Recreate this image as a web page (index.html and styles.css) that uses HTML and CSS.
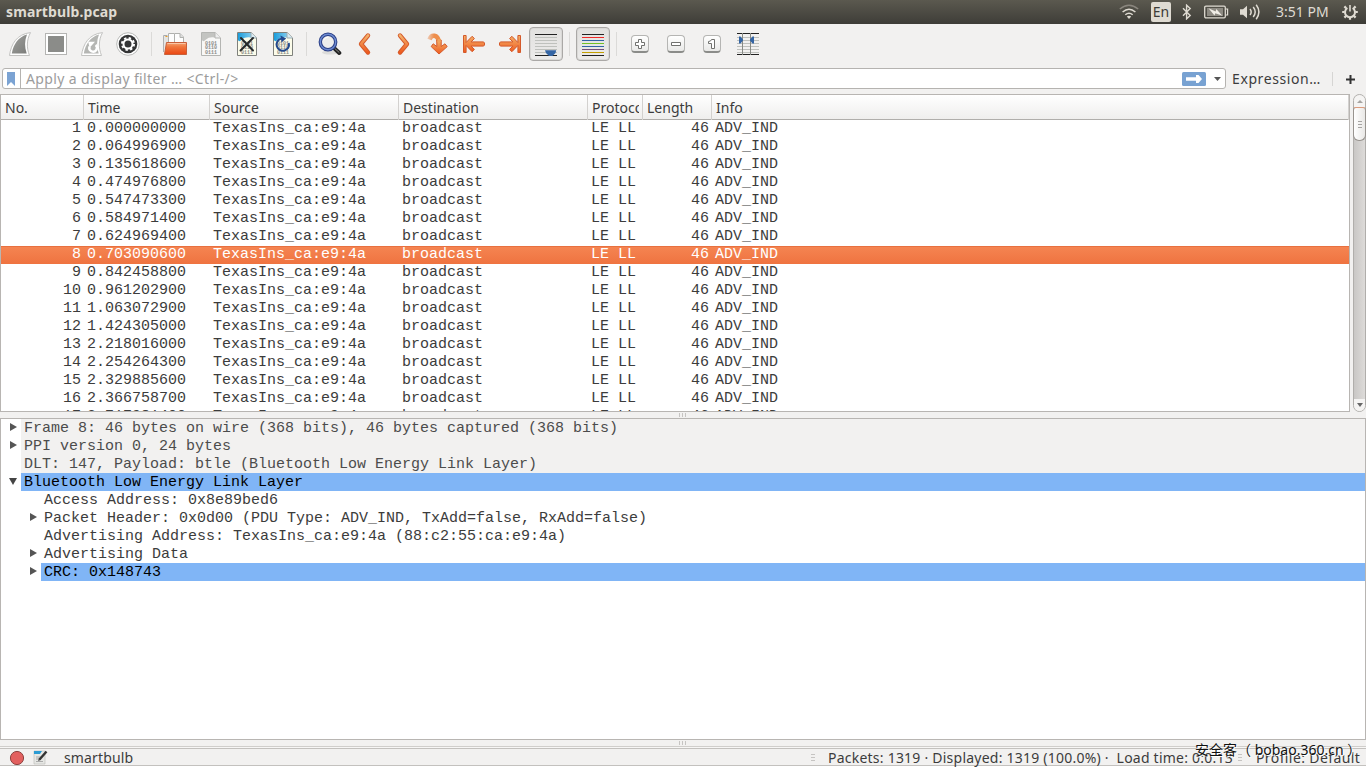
FILE: index.html
```
<!DOCTYPE html>
<html lang="en">
<head>
  <meta charset="UTF-8">
  <title>smartbulb.pcap</title>
  <link rel="stylesheet" href="styles.css">
</head>
<body>

<svg class="defs" width="0" height="0">
  <defs>
    <linearGradient id="orange" x1="0" y1="0" x2="0" y2="1">
      <stop offset="0" stop-color="#f4b26b"/>
      <stop offset="1" stop-color="#ee5a1e"/>
    </linearGradient>
    <linearGradient id="hook" gradientUnits="userSpaceOnUse" x1="1" y1="0" x2="8" y2="0">
      <stop offset="0" stop-color="#e98b52" stop-opacity=".3"/>
      <stop offset="1" stop-color="#ee8e4b"/>
    </linearGradient>
    <linearGradient id="folder" x1="0" y1="0" x2="0" y2="1">
      <stop offset="0" stop-color="#f6a878"/>
      <stop offset=".35" stop-color="#f0783f"/>
      <stop offset="1" stop-color="#ea4612"/>
    </linearGradient>
    <linearGradient id="grey" x1="0" y1="0" x2="1" y2="1">
      <stop offset="0" stop-color="#a0a19e"/>
      <stop offset="1" stop-color="#7c7d7a"/>
    </linearGradient>
    <linearGradient id="sky" x1="0" y1="0" x2="1" y2="0">
      <stop offset="0" stop-color="#1b9ddb"/>
      <stop offset="1" stop-color="#7cc9ee"/>
    </linearGradient>
  </defs>
</svg>

<header class="titlebar">
  <span class="title">smartbulb.pcap</span>
  <div class="tray">
    <svg class="wifi" width="20" height="16" viewBox="0 0 20 16" fill="none" stroke="#dfdbd2" stroke-width="1.5">
      <path d="M.8 5Q10-2.6 19.2 5" stroke="#8a867e"/>
      <path d="M3.6 8Q10 2.4 16.4 8"/>
      <path d="M6.3 10.8Q10 7.6 13.7 10.8"/>
      <path d="M7.8 12.6Q10 11 12.2 12.6L10 15z" fill="#dfdbd2" stroke="none"/>
    </svg>
    <span class="lang">En</span>
    <svg class="bt" width="10" height="16" viewBox="0 0 10 16" fill="none" stroke="#dfdbd2" stroke-width="1.4">
      <path d="M1 4.2l7.2 7.2-3.6 3.4V1.2l3.6 3.4L1 11.8"/>
    </svg>
    <svg class="battery" width="25" height="14" viewBox="0 0 25 14">
      <rect x=".7" y="1.2" width="20.6" height="11.6" rx="1.2" fill="none" stroke="#dfdbd2" stroke-width="1.3"/>
      <path d="M22 4h1.6v6H22" fill="none" stroke="#dfdbd2" stroke-width="1.2"/>
      <path d="M3 3h16v8H3z" fill="#8d8a82"/>
      <path d="M4.5 3.2l7.2 3.2.6-2.4 6 6.8-7-2.6-.8 2.4z" fill="#f0ede6"/>
    </svg>
    <svg class="sound" width="21" height="16" viewBox="0 0 21 16">
      <path d="M0 5.2h3L7 1.8v12.4L3 10.8H0z" fill="#dfdbd2"/>
      <g fill="none" stroke="#dfdbd2" stroke-width="1.5">
        <path d="M10 5q2.4 3 0 6"/>
        <path d="M13.2 3q4 5 0 10"/>
        <path d="M16.2.8q5.4 7.2 0 14.4"/>
      </g>
    </svg>
    <span class="clock">3:51 PM</span>
    <svg class="power" width="16" height="16" viewBox="0 0 16 16" fill="none" stroke="#dfdbd2">
      <path d="M5.4 4A5 5 0 1 0 10.6 4" stroke-width="2"/>
      <path d="M8 1v6.5" stroke-width="1.6"/>
      <path d="M.2 8h2.4M13.4 8h2.4M8 13.2v2.6M2.4 2.4l1.8 1.8M13.6 2.4l-1.8 1.8M2.4 13.6l1.8-1.8M13.6 13.6l-1.8-1.8" stroke-width="2.2"/>
    </svg>
  </div>
</header>

<nav class="toolbar">
  <button><svg width="24" height="24" viewBox="0 0 24 24">
    <path d="M1.5 23.5C3 12 9 2 22.5.6 18.5 8 18.5 16 21.5 23.5z" fill="#fff" stroke="#c2c2c0"/>
    <path d="M3.8 21.5C5.5 12 10.5 5 19 2.6 16.5 9 16.5 15 18.7 21.5z" fill="url(#grey)"/>
  </svg></button>
  <button><svg width="24" height="24" viewBox="0 0 24 24">
    <rect x="1.5" y="1.5" width="21" height="21" fill="#fff" stroke="#b4b4b2"/>
    <rect x="4" y="4" width="16" height="16" fill="#8b8c89"/>
  </svg></button>
  <button><svg width="24" height="24" viewBox="0 0 24 24">
    <path d="M1.5 23.5C3 12 9 2 22.5.6 18.5 8 18.5 16 21.5 23.5z" fill="#fff" stroke="#c2c2c0"/>
    <path d="M3.8 21.5C5.5 12 10.5 5 19 2.6 16.5 9 16.5 15 18.7 21.5z" fill="#b5b6b3"/>
    <path d="M9.600 14.500a3.800 3.800 0 1 0 6-1.500" fill="none" stroke="#fff" stroke-width="2.4"/>
    <path d="M8.200 9.700h6.800l-5.400 6z" fill="#fff"/>
  </svg></button>
  <button><svg width="24" height="24" viewBox="0 0 24 24">
    <circle cx="12" cy="12" r="11.3" fill="#fff" stroke="#b9bab8"/>
    <circle cx="12" cy="12" r="9.3" fill="#343536"/>
    <circle cx="12" cy="12" r="4.5" fill="none" stroke="#fff" stroke-width="2"/>
    <circle cx="12" cy="12" r="6" fill="none" stroke="#fff" stroke-width="2" stroke-dasharray="2.36 2.35"/>
  </svg></button>
  <i class="sep"></i>
  <button><svg width="24" height="24" viewBox="0 0 24 24">
    <path d="M.6 20V3.5h3.8" fill="#eee" stroke="#aaa"/>
    <path d="M1.5 4h4v16h-4z" fill="#e4e4e2"/>
    <path d="M2.5 4.5h2" stroke="#f0a020"/>
    <path d="M5.5 12V1.5H11l3 3V12z" fill="#fdfdfd" stroke="#b0b1ae"/>
    <path d="M11.5 12V1.5H17L20.5 5V12z" fill="#fdfdfd" stroke="#b0b1ae"/>
    <path d="M17 1.5v4h3.5" fill="#ddd" stroke="#b0b1ae"/>
    <path d="M3.5 10.5h20v12h-22z" fill="url(#folder)" stroke="#c9603a"/>
    <path d="M4.5 11.5h18" stroke="#f8c6a6"/>
  </svg></button>
  <button><svg width="24" height="24" viewBox="0 0 24 24">
    <path d="M2.5.5h13.6l5.4 5.4v17.6h-19z" fill="#f8f8f7" stroke="#b4b5b2"/>
    <path d="M3 1h13v4.5q-6-1-9 2T3 8z" fill="#c3c4c1"/>
    <path d="M16 .5V6h5.5" fill="#eee" stroke="#b4b5b2"/>
    <g class="bits"><text x="6" y="12.5">0101</text><text x="6" y="17">0110</text><text x="6" y="21.5">0111</text></g>
  </svg></button>
  <button><svg width="24" height="24" viewBox="0 0 24 24">
    <path d="M2.5.5h13.6l5.4 5.4v17.6h-19z" fill="#fcfcea" stroke="#7f817c"/>
    <path d="M3 1h13v4.5q-6-1-9 2T3 8z" fill="url(#sky)"/>
    <path d="M16 .5V6h5.5" fill="#d6ebf5" stroke="#9dabb0"/>
    <g class="bits"><text x="6" y="12.5">0101</text><text x="6" y="17">0110</text><text x="6" y="21.5">0111</text></g>
    <path d="M6 6L18 18.5M18 6L5.500 18.500" stroke="#25292b" stroke-width="2" stroke-linecap="round"/>
  </svg></button>
  <button><svg width="24" height="24" viewBox="0 0 24 24">
    <path d="M2.5.5h13.6l5.4 5.4v17.6h-19z" fill="#fcfcea" stroke="#7f817c"/>
    <path d="M3 1h13v4.5q-6-1-9 2T3 8z" fill="url(#sky)"/>
    <path d="M16 .5V6h5.5" fill="#d6ebf5" stroke="#9dabb0"/>
    <g class="bits"><text x="6" y="12.5">0101</text><text x="6" y="17">0110</text><text x="6" y="21.5">0111</text></g>
    <path d="M10 6.6a6.200 6.200 0 1 0 7.800 4.400" fill="none" stroke="#23498d" stroke-width="2"/>
    <path d="M9.5 3.500l5.700 3-4.700 4z" fill="#23498d"/>
  </svg></button>
  <i class="sep"></i>
  <button><svg width="24" height="24" viewBox="0 0 24 24">
    <ellipse cx="12" cy="20.5" rx="8" ry="2" fill="#dcdcda"/>
    <path d="M16.5 16.5l4.800 4.500" stroke="#222" stroke-width="4" stroke-linecap="round"/>
    <path d="M17 16.700l4 3.600" stroke="#8b8c89" stroke-width="1" stroke-linecap="round"/>
    <circle cx="10" cy="10" r="7.7" fill="#eeeeec" stroke="#2b3f86" stroke-width="3.4"/>
    <circle cx="10" cy="10" r="7.7" fill="none" stroke="#6c8ad0" stroke-width="1.4"/>
    <path d="M5 9a5 5 0 0 1 6-4Q7 6 5 9" fill="#fff"/>
  </svg></button>
  <button><svg width="24" height="24" viewBox="0 0 24 24">
    <path d="M14 3.5L7 12l7 8.500" class="line-out"/><path d="M14 3.5L7 12l7 8.500" class="line-in"/>
  </svg></button>
  <button><svg width="24" height="24" viewBox="0 0 24 24">
    <path d="M10 3.5l7 8.500-7 8.500" class="line-out"/><path d="M10 3.5l7 8.500-7 8.500" class="line-in"/>
  </svg></button>
  <button><svg width="24" height="24" viewBox="0 0 24 24">
    <path d="M3.500 7.500Q5 3.200 8.500 3.800T13 10" fill="none" stroke="url(#hook)" stroke-width="4.6"/>
    <path d="M10.800 8h4.400v6.500l3.800-2.700 2.200 2.800L13 22 5.200 14.600l2-2.800 3.600 2.700z" fill="url(#orange)" stroke="#d4592a" stroke-linejoin="round"/>
    <path d="M11.400 7h3.300v3h-3.300z" fill="#f0a25c"/>
  </svg></button>
  <button><svg width="24" height="24" viewBox="0 0 24 24">
    <path d="M1.500 3.500h2.600v7l6-6.200 2.300 2.200-3.300 3.400h12q1.500 0 1.500 2.100t-1.500 2.100h-12l3.300 3.400-2.300 2.200-6-6.200v7H1.500z" fill="url(#orange)" stroke="#d4592a" stroke-linejoin="round"/>
  </svg></button>
  <button><svg width="24" height="24" viewBox="0 0 24 24">
    <path d="M22.500 3.500h-2.600v7l-6-6.200-2.300 2.200 3.300 3.400h-12Q1.400 9.900 1.400 12t1.500 2.100h12l-3.300 3.400 2.300 2.200 6-6.200v7h2.600z" fill="url(#orange)" stroke="#d4592a" stroke-linejoin="round"/>
  </svg></button>
  <button class="pressed"><svg width="24" height="24" viewBox="0 0 24 24">
    <path d="M1 2.5h22M1 23.5h22" stroke="#222"/>
    <path d="M1 5.5h22M1 8.5h22M1 11.5h22M1 14.5h22M1 17.5h22M1 20.5h22" stroke="#bfc1bd"/>
    <path d="M11 18.200h11.200L21.500 21l-3 3h-3.500l-3-3z" fill="#3465a4"/>
  </svg></button>
  <i class="sep"></i>
  <button class="pressed"><svg width="24" height="24" viewBox="0 0 24 24">
    <path d="M1 2.5h22M1 23.5h22" stroke="#222"/>
    <path d="M1 5.5h22" stroke="#ef2929"/>
    <path d="M1 8.5h22M1 14.5h22" stroke="#3465a4"/>
    <path d="M1 11.5h22" stroke="#73c226"/>
    <path d="M1 17.5h22" stroke="#75507b"/>
    <path d="M1 20.5h22" stroke="#c4a000"/>
  </svg></button>
  <i class="sep"></i>
  <button><span class="key"><svg width="12" height="12" viewBox="0 0 12 12"><path d="M4.5 1.5h3v3h3v3h-3v3h-3v-3h-3v-3h3z"/></svg></span></button>
  <button><span class="key"><svg width="12" height="12" viewBox="0 0 12 12"><path d="M1.5 4.5h9v3h-9z"/></svg></span></button>
  <button><span class="key"><svg width="12" height="12" viewBox="0 0 12 12"><path d="M5.5 1.5h3v9h-3v-5h-3v-2q2.500 0 3-2z"/></svg></span></button>
  <button><svg width="24" height="24" viewBox="0 0 24 24">
    <path d="M1 5.5h22M1 8.5h22M1 11.5h22M1 14.5h22M1 17.5h22M1 20.5h22" stroke="#bfc1bd"/>
    <path d="M1 1.5h22M1 22.5h22" stroke="#222"/>
    <path d="M6.5 1v22M14.5 1v22" stroke="#888a85"/>
    <path d="M3 4.500h1.500l2.500 3v1l-2.500 3H3zM18 4.500h-1.500l-2.500 3v1l2.500 3H18z" fill="#3465a4"/>
  </svg></button>
</nav>

<section class="filterbar">
  <div class="filter">
    <span class="bookmark"><svg width="8" height="14" viewBox="0 0 8 14"><path d="M0 0h8v14l-4-4-4 4z" fill="#7ba3d3"/></svg></span>
    <span class="placeholder">Apply a display filter … &lt;Ctrl-/&gt;</span>
    <svg class="apply" width="24" height="14" viewBox="0 0 24 14">
      <rect width="24" height="14" rx="1.5" fill="#78a2d2"/>
      <path d="M4 5.200h10V3h2.500L20 7l-3.500 4H14V8.800H4z" fill="#fff"/>
    </svg>
    <svg class="drop" width="7" height="4" viewBox="0 0 7 4"><path d="M0 0h7L3.500 4z" fill="#555"/></svg>
  </div>
  <span class="expression">Expression…</span>
  <i class="vline"></i>
  <svg class="add" width="9" height="9" viewBox="0 0 9 9"><path d="M4.500 0v9M0 4.500h9" stroke="#333" stroke-width="2"/></svg>
</section>

<main>
  <section class="packets">
    <div class="list">
      <div class="cols head">
        <span>No.</span><span>Time</span><span>Source</span><span>Destination</span><span><b class="clip">Protocol</b></span><span>Length</span><span>Info</span>
      </div>
      <div class="rows" id="rows"></div>
    </div>
    <div class="scrollbar">
      <i class="up"></i>
      <i class="thumb"><b></b></i>
      <i class="down"></i>
    </div>
  </section>

  <div class="splitter"><i></i></div>

  <section class="details">
    <div class="node shut"><span class="shade">Frame 8: 46 bytes on wire (368 bits), 46 bytes captured (368 bits)</span></div>
    <div class="node shut"><span class="shade">PPI version 0, 24 bytes</span></div>
    <div class="node"><span class="shade">DLT: 147, Payload: btle (Bluetooth Low Energy Link Layer)</span></div>
    <div class="node open"><span class="blue">Bluetooth Low Energy Link Layer</span></div>
    <div class="node child"><span>Access Address: 0x8e89bed6</span></div>
    <div class="node child shut"><span>Packet Header: 0x0d00 (PDU Type: ADV_IND, TxAdd=false, RxAdd=false)</span></div>
    <div class="node child"><span>Advertising Address: TexasIns_ca:e9:4a (88:c2:55:ca:e9:4a)</span></div>
    <div class="node child shut"><span>Advertising Data</span></div>
    <div class="node child shut"><span class="blue">CRC: 0x148743</span></div>
  </section>

  <div class="splitter"><i></i></div>
</main>

<footer class="status">
  <svg class="expert" width="16" height="16" viewBox="0 0 16 16"><circle cx="8" cy="8" r="6.6" fill="#e2605f" stroke="#8e4340"/></svg>
  <svg class="note" width="15" height="15" viewBox="0 0 15 15">
    <path d="M1 1h11v13H1z" fill="#e6e7e4" stroke="#b9bbb7" stroke-width=".6"/>
    <path d="M1 1h8l-2 3H1z" fill="#2a9bd3"/>
    <path d="M3 7h5M3 9h4M3 11.500h7" stroke="#aaa"/>
    <path d="M13.500 1.500L6.500 9.500" stroke="#333" stroke-width="2.4"/>
    <path d="M5.200 11l.6-2.400 1.700 1.400z" fill="#333"/>
  </svg>
  <span class="file">smartbulb</span>
  <i class="grip"></i>
  <span class="counts">Packets: 1319 · Displayed: 1319 (100.0%) ·&nbsp; Load time: 0:0.13</span>
  <i class="grip second"></i>
  <span class="profile">Profile: Default</span>
  <span class="watermark">安全客（ bobao.360.cn ）</span>
</footer>

<script>
const times = [
  '0.000000000', '0.064996900', '0.135618600', '0.474976800', '0.547473300', '0.584971400',
  '0.624969400', '0.703090600', '0.842458800', '0.961202900', '1.063072900', '1.424305000',
  '2.218016000', '2.254264300', '2.329885600', '2.366758700', '2.717981400'
];
const selected = 8;

document.getElementById('rows').innerHTML = times.map((time, i) => `
  <div class="cols row${i + 1 === selected ? ' selected' : ''}">
    <span class="num">${i + 1}</span><span>${time}</span><span>TexasIns_ca:e9:4a</span><span>broadcast</span>
    <span>LE LL</span><span class="num">46</span><span>ADV_IND</span>
  </div>`).join('');
</script>

</body>
</html>
```
FILE: styles.css
```
* {
  box-sizing: border-box;
}
body {
  margin: 0;
  width: 1366px;
  height: 768px;
  overflow: hidden;
  display: flex;
  flex-direction: column;
  background: #f2f1f0;
  color: #3c3c3c;
  font-family: 'Noto Sans', 'Open Sans', sans-serif;
  font-size: 14px;
}
svg {
  display: block;
  flex: none;
}
.defs {
  position: absolute;
}

/* top panel */
.titlebar {
  height: 24px;
  flex: none;
  display: flex;
  align-items: center;
  justify-content: space-between;
  padding: 0 8px 0 6px;
  background: linear-gradient(#5b594f, #3e3d38);
  color: #dfdbd2;
}
.title {
  padding-bottom: 2px;
  font-weight: bold;
  letter-spacing: 0.12px;
}
.tray {
  display: flex;
  align-items: center;
}
.lang {
  width: 20px;
  height: 20px;
  margin: 0 11px 0 12px;
  border-radius: 2px;
  background: #dfdbd2;
  color: #3c3b37;
  line-height: 20px;
  text-align: center;
}
.battery {
  margin: 0 11px 0 12px;
}
.clock {
  width: 54px;
  margin: 0 12px 0 15px;
  padding-bottom: 2px;
  white-space: nowrap;
}

/* toolbar */
.toolbar {
  height: 44px;
  flex: none;
  display: flex;
  padding: 3px 0 0 2px;
}
.toolbar button {
  width: 34px;
  height: 34px;
  margin: 0 1px;
  padding: 0;
  border: 1px solid transparent;
  border-radius: 4px;
  background: none;
  display: flex;
  align-items: center;
  justify-content: center;
}
.toolbar .pressed {
  border: 1px solid #aaa8a6;
  background: linear-gradient(#e2e1df, #ecebea);
  box-shadow: inset 0 0 0 1px #dad9d7;
}
.sep {
  width: 1px;
  height: 24px;
  margin: 5px 5px 0;
  background: #dbdad8;
}
.bits {
  font: bold 5px 'Liberation Mono', monospace;
  fill: #8b8c89;
}
.line-out, .line-in {
  fill: none;
  stroke-linecap: round;
  stroke-linejoin: round;
}
.line-out {
  stroke: #d4592a;
  stroke-width: 4.4;
}
.line-in {
  stroke: url(#orange);
  stroke-width: 2.6;
}
.key {
  width: 18px;
  height: 18px;
  display: grid;
  place-items: center;
  border: 1px solid #b5b5b3;
  border-bottom: 2px solid #8b8c89;
  border-radius: 4px;
  background: linear-gradient(#fff, #e9e9e7);
}
.key path {
  fill: #fff;
  stroke: #70716e;
}

/* display filter */
.filterbar {
  height: 26px;
  flex: none;
  display: flex;
  align-items: flex-start;
  padding-left: 2px;
}
.filter {
  width: 1224px;
  height: 21px;
  display: flex;
  align-items: center;
  padding-right: 4px;
  border: 1px solid #b5b3b0;
  border-radius: 3px;
  background: #fff;
}
.bookmark {
  width: 18px;
  height: 19px;
  padding-right: 2px;
  display: grid;
  place-items: center;
  border-right: 1px solid #b5b3b0;
}
.placeholder {
  margin-left: 5px;
  color: #9c9c9c;
  letter-spacing: 0.38px;
}
.apply {
  margin: 0 8px 0 auto;
}
.expression {
  width: 93px;
  margin-left: 6px;
  line-height: 21px;
  letter-spacing: 0.6px;
}
.vline {
  width: 1px;
  height: 14px;
  margin: 4px 13px 0 7px;
  background: #d6d5d3;
}
.add {
  margin-top: 7px;
}

/* packet list */
main {
  flex: 1;
  min-height: 0;
}
.packets {
  height: 318px;
  display: flex;
  justify-content: space-between;
}
.list {
  width: 1350px;
  overflow: hidden;
  border: 1px solid #b8b5b2;
  background: #fff;
}
.cols {
  display: grid;
  grid-template-columns: 83px 126px 189px 189px 55px 69px 637px;
}
.head {
  height: 25px;
  border-bottom: 1px solid #b0aeab;
  background: linear-gradient(#fff, #efeeed);
  line-height: 25px;
}
.head span {
  padding-left: 4px;
  white-space: nowrap;
  border-right: 1px solid #d3d1cf;
}
.clip {
  display: block;
  width: 47px;
  overflow: hidden;
  font-weight: normal;
}
.row, .details {
  font-family: 'Liberation Mono', monospace;
  font-size: 15px;
  white-space: nowrap;
}
.row {
  height: 18px;
  line-height: 18px;
}
.row span {
  padding: 0 3px;
}
.row .num {
  text-align: right;
}
.selected {
  background: linear-gradient(#f58552, #ef7340);
  box-shadow: inset 0 1px #e8703f;
  color: #fff;
}
.scrollbar {
  width: 13px;
  display: flex;
  flex-direction: column;
  border: 1px solid #b0aeab;
  border-radius: 7px;
  background: linear-gradient(90deg, #c9c7c5, #dddbd9);
}
.up, .down {
  height: 12px;
  display: grid;
  place-items: center;
  border-radius: 6px 6px 0 0;
  background: #f5f4f3;
}
.up::after, .down::after {
  content: '';
  border: 3px solid transparent;
}
.up::after {
  border-top-width: 0;
  border-bottom-color: #a6a4a2;
}
.down {
  margin-top: auto;
  border-radius: 0 0 6px 6px;
}
.down::after {
  border-top: 4px solid #666;
  border-bottom-width: 0;
}
.thumb {
  height: 34px;
  margin: 0 -1px;
  display: grid;
  place-items: center;
  border: 1px solid #98948f;
  border-top-color: #dc9b7d;
  border-radius: 3px 3px 6px 6px;
  background: linear-gradient(90deg, #fff, #e9e8e6);
}
.thumb b {
  width: 4px;
  height: 7px;
  background: repeating-linear-gradient(#a6a4a2 0 1px, transparent 1px 3px);
}
.splitter {
  height: 6px;
  display: grid;
  place-items: center;
}
.splitter i {
  width: 8px;
  height: 4px;
  background: repeating-linear-gradient(90deg, #c6c4c2 0 1px, transparent 1px 3px);
}

/* packet details */
.details {
  height: 322px;
  border: 1px solid #b8b5b2;
  background: #fff;
}
.node {
  height: 18px;
  padding-left: 20px;
  position: relative;
  line-height: 19px;
}
.node span {
  display: block;
  height: 18px;
  padding-left: 3px;
}
.child {
  padding-left: 40px;
}
.shut::before, .open::before {
  content: '';
  position: absolute;
  left: 9px;
  top: 4px;
  border: 4px solid transparent;
  border-left: 7px solid #555;
  border-right: 0;
}
.child::before {
  left: 29px;
}
.open::before {
  left: 8px;
  top: 5px;
  border: 4px solid transparent;
  border-top: 7px solid #444;
  border-bottom: 0;
}
.shade {
  background: #f2f1f0;
  color: #4c4c4c;
}
.blue {
  background: #80b5f6;
  color: #000;
}

/* status bar */
.status {
  height: 22px;
  flex: none;
  display: flex;
  align-items: center;
  position: relative;
  padding-left: 9px;
  border-top: 1px solid #d0cecb;
  box-shadow: inset 0 1px #f7f6f5, inset 0 2px #c3c1be, inset 0 -2px #fff, inset 0 -3px #c3c1be;
  white-space: nowrap;
}
.note {
  margin: 0 16px 0 8px;
}
.file {
  width: 747px;
  letter-spacing: 0.15px;
}
.grip {
  width: 4px;
  height: 8px;
  background: repeating-linear-gradient(#c6c4c2 0 1px, transparent 1px 3px);
}
.counts {
  width: 405px;
  margin-left: 13px;
  letter-spacing: 0.23px;
}
.second {
  margin-left: 5px;
}
.profile {
  margin-left: 14px;
  letter-spacing: 0.4px;
}
/* site mark stamped over the corner */
.watermark {
  position: absolute;
  left: 1195px;
  top: -8px;
  color: #111;
  font-family: 'Noto Sans', 'Noto Sans CJK SC', sans-serif;
  text-shadow: 1px 1px #fff;
}
```
